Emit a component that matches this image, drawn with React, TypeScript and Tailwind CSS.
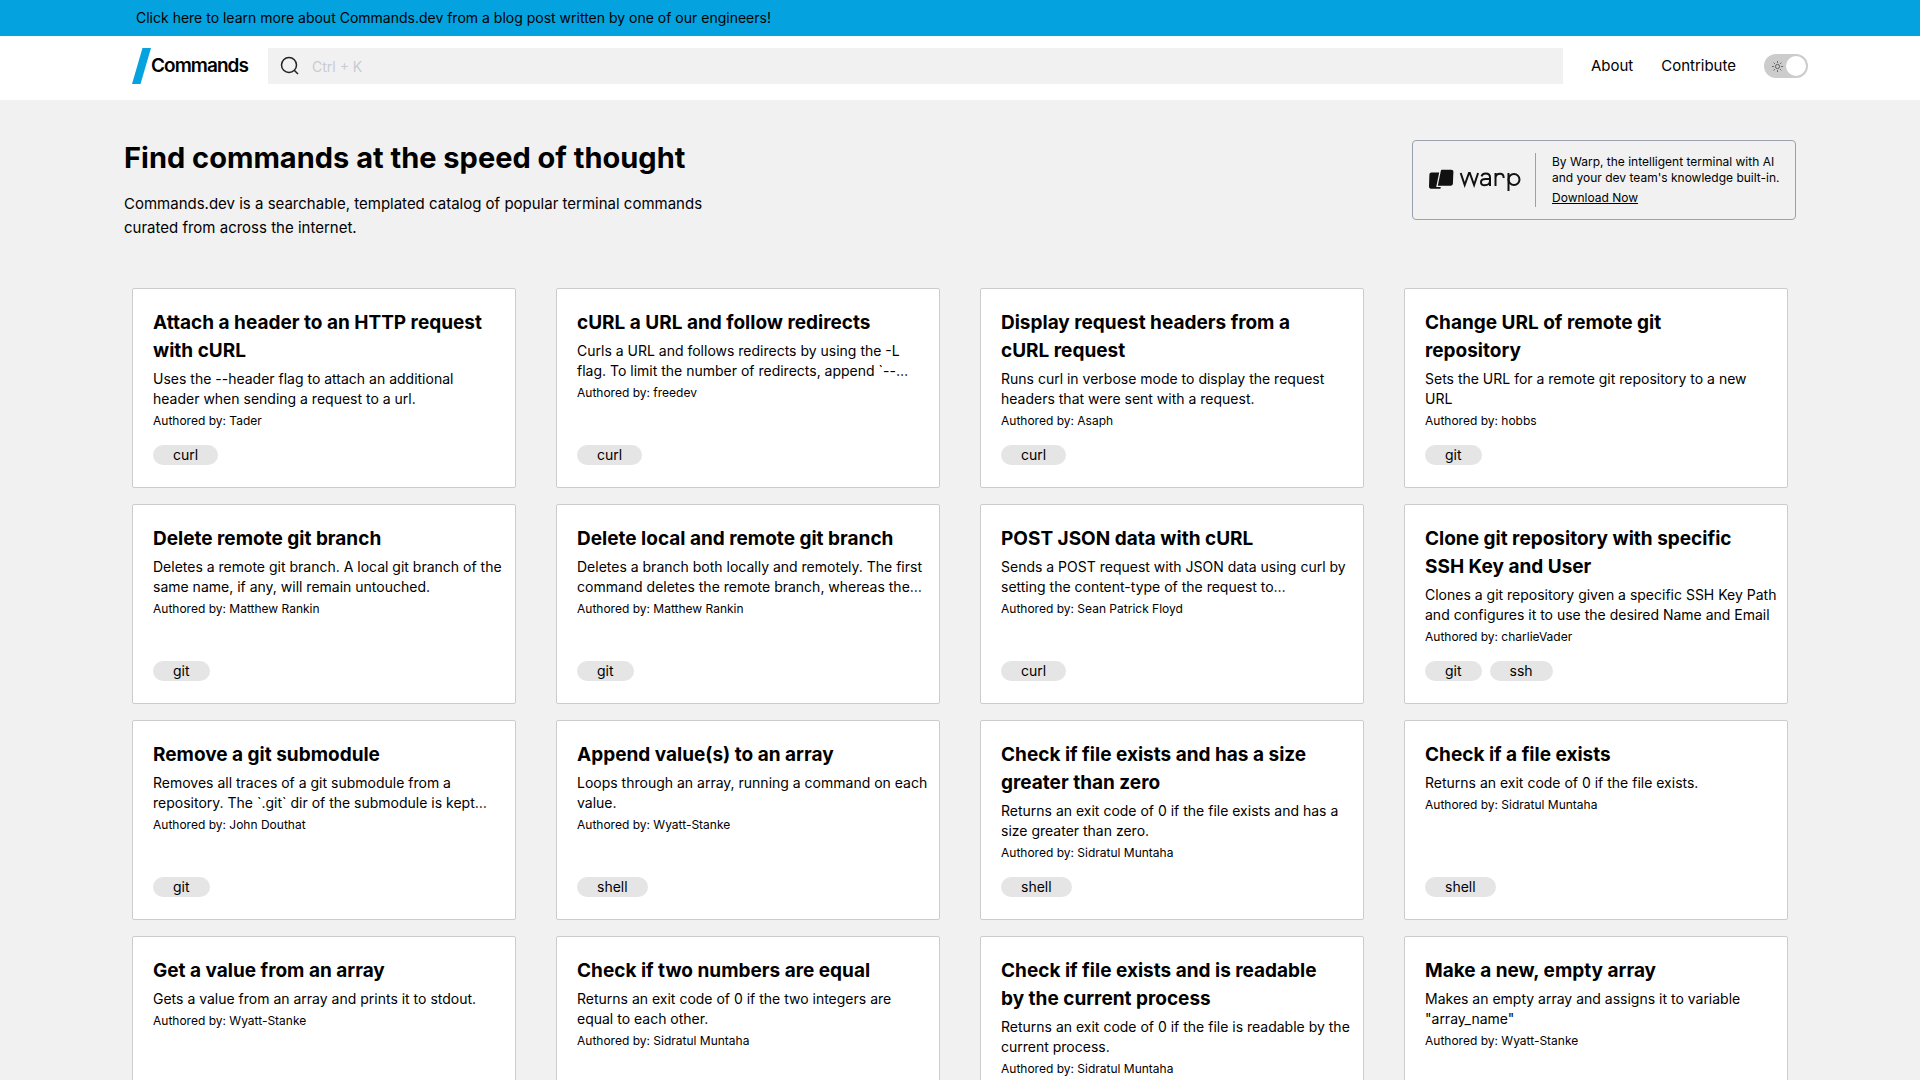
interface Command {
  title: string;
  description: string;
  author: string;
  tags: string[];
}

// line breaks inside title and description are kept by the card
const commands: Command[] = [
  {
    title: "Attach a header to an HTTP request\nwith cURL",
    description: "Uses the --header flag to attach an additional\nheader when sending a request to a url.",
    author: "Tader",
    tags: ["curl"],
  },
  {
    title: "cURL a URL and follow redirects",
    description: "Curls a URL and follows redirects by using the -L\nflag. To limit the number of redirects, append `--…",
    author: "freedev",
    tags: ["curl"],
  },
  {
    title: "Display request headers from a\ncURL request",
    description: "Runs curl in verbose mode to display the request\nheaders that were sent with a request.",
    author: "Asaph",
    tags: ["curl"],
  },
  {
    title: "Change URL of remote git\nrepository",
    description: "Sets the URL for a remote git repository to a new\nURL",
    author: "hobbs",
    tags: ["git"],
  },
  {
    title: "Delete remote git branch",
    description: "Deletes a remote git branch. A local git branch of the\nsame name, if any, will remain untouched.",
    author: "Matthew Rankin",
    tags: ["git"],
  },
  {
    title: "Delete local and remote git branch",
    description: "Deletes a branch both locally and remotely. The first\ncommand deletes the remote branch, whereas the…",
    author: "Matthew Rankin",
    tags: ["git"],
  },
  {
    title: "POST JSON data with cURL",
    description: "Sends a POST request with JSON data using curl by\nsetting the content-type of the request to…",
    author: "Sean Patrick Floyd",
    tags: ["curl"],
  },
  {
    title: "Clone git repository with specific\nSSH Key and User",
    description: "Clones a git repository given a specific SSH Key Path\nand configures it to use the desired Name and Email",
    author: "charlieVader",
    tags: ["git", "ssh"],
  },
  {
    title: "Remove a git submodule",
    description: "Removes all traces of a git submodule from a\nrepository. The `.git` dir of the submodule is kept…",
    author: "John Douthat",
    tags: ["git"],
  },
  {
    title: "Append value(s) to an array",
    description: "Loops through an array, running a command on each\nvalue.",
    author: "Wyatt-Stanke",
    tags: ["shell"],
  },
  {
    title: "Check if file exists and has a size\ngreater than zero",
    description: "Returns an exit code of 0 if the file exists and has a\nsize greater than zero.",
    author: "Sidratul Muntaha",
    tags: ["shell"],
  },
  {
    title: "Check if a file exists",
    description: "Returns an exit code of 0 if the file exists.",
    author: "Sidratul Muntaha",
    tags: ["shell"],
  },
  {
    title: "Get a value from an array",
    description: "Gets a value from an array and prints it to stdout.",
    author: "Wyatt-Stanke",
    tags: ["shell"],
  },
  {
    title: "Check if two numbers are equal",
    description: "Returns an exit code of 0 if the two integers are\nequal to each other.",
    author: "Sidratul Muntaha",
    tags: ["shell"],
  },
  {
    title: "Check if file exists and is readable\nby the current process",
    description: "Returns an exit code of 0 if the file is readable by the\ncurrent process.",
    author: "Sidratul Muntaha",
    tags: ["shell"],
  },
  {
    title: "Make a new, empty array",
    description: 'Makes an empty array and assigns it to variable\n"array_name"',
    author: "Wyatt-Stanke",
    tags: ["shell"],
  },
];

function Logo() {
  return (
    <a href="#" className="flex items-center">
      <svg width="19" height="36" viewBox="0 0 19 36" aria-hidden="true">
        <path d="M10.5 0H19L8.5 36H0z" fill="#04a3df" />
      </svg>
      <span className="text-[19px] font-semibold tracking-tighter">Commands</span>
    </a>
  );
}

function SearchBar() {
  return (
    <label className="flex h-9 flex-1 items-center bg-[#f1f1f1] pl-3">
      <svg width="20" height="20" viewBox="0 0 20 20" fill="none" stroke="#222" strokeWidth="1.5" aria-hidden="true">
        <circle cx="9" cy="9" r="7.5" />
        <path d="M14.2 14.2L18 18" />
      </svg>
      <input
        type="text"
        aria-label="Search commands"
        placeholder="Ctrl + K"
        className="ml-3 h-full min-w-0 flex-1 bg-transparent text-sm outline-none placeholder:text-[#c8ccd2]"
      />
    </label>
  );
}

function ThemeSwitch() {
  return (
    <button
      type="button"
      role="switch"
      aria-checked="false"
      aria-label="Dark mode"
      className="flex h-6 w-11 items-center justify-between rounded-full bg-[#cccccc] pr-0.5 pl-2"
    >
      <svg width="11" height="11" viewBox="0 0 11 11" fill="none" stroke="#555" strokeWidth="0.9" aria-hidden="true">
        <circle cx="5.5" cy="5.5" r="2.1" />
        <path d="M5.5 0v1.8M5.5 9.2V11M0 5.5h1.8M9.2 5.5H11M1.6 1.6l1.3 1.3M8.1 8.1l1.3 1.3M1.6 9.4l1.3-1.3M8.1 2.9l1.3-1.3" />
      </svg>
      <span className="size-5 rounded-full bg-white" />
    </button>
  );
}

function WarpLogo() {
  return (
    <svg width="92" height="22" viewBox="0 0 92 22" role="img" aria-label="warp">
      <path d="M10.2 3.6H2.6C1.2 3.6.5 4.4.4 5.7L0 17.6c0 1.4.7 2.1 2 2.1h9.4l.4-1.6H7.2z" fill="#111" />
      <path d="M13 .7h9.2c1.4 0 2.2.8 2.2 2.1l-.5 11.8c-.1 1.4-.9 2.1-2.2 2.1H8.8l3-14.7C12 1.1 12.3.7 13 .7z" fill="#111" />
      <g fill="none" stroke="#111" strokeWidth="2">
        <path d="M31.7 4l4 12 4.3-12h.8l4.3 12 4-12" />
        <path d="M52.5 7.3c.7-2 2.3-2.7 4.2-2.7 2.7 0 4.3 1.3 4.3 4V17M61 10h-4.3c-3 0-4.7 1-4.7 3.2 0 2 1.5 3.1 3.8 3.1 3 0 5.2-1.8 5.2-4.6" />
        <path d="M66.5 17V4M66.5 9c.3-2.8 2-4.2 4.5-4.2 2.6 0 3.7 1.6 3.7 4.2" />
        <path d="M79.5 22V4" />
        <circle cx="85" cy="10.5" r="5.5" />
      </g>
    </svg>
  );
}

function WarpCard() {
  return (
    <aside className="flex h-20 w-96 items-center rounded border border-gray-400 pl-4">
      <WarpLogo />
      <div className="ml-3.5 h-[54px] w-px bg-gray-400" />
      <div className="ml-4 text-xs">
        <p>
          By Warp, the intelligent terminal with AI
          <br />
          and your dev team's knowledge built-in.
        </p>
        <a href="#" className="mt-1 block underline">
          Download Now
        </a>
      </div>
    </aside>
  );
}

function CommandCard({ title, description, author, tags }: Command) {
  return (
    <article className="flex min-h-[200px] flex-col rounded-xs border border-[#cccccc] bg-white pt-5 pr-1 pb-[22px] pl-5">
      <h2 className="text-[19px] leading-7 font-bold whitespace-pre-line">{title}</h2>
      <p className="mt-1 text-sm whitespace-pre-line">{description}</p>
      <p className="mt-1 text-xs">Authored by: {author}</p>
      <div className="mt-auto flex gap-2">
        {tags.map((tag) => (
          <a key={tag} href="#" className="rounded-full bg-[#e5e5e5] px-5 text-sm">
            {tag}
          </a>
        ))}
      </div>
    </article>
  );
}

export default function App() {
  return (
    <div className="min-h-screen bg-[#f1f1f1] font-['Inter',sans-serif] text-black">
      <div className="h-9 bg-[#04a3df] px-[136px]">
        <a href="#" className="block text-sm leading-9">
          Click here to learn more about Commands.dev from a blog post written by one of our engineers!
        </a>
      </div>

      <header className="flex h-16 items-center bg-white pr-28 pb-1 pl-[132px]">
        <Logo />
        <div className="ml-5 flex flex-1">
          <SearchBar />
        </div>
        <nav className="ml-7 flex items-center gap-7 text-[15px]">
          <a href="#">About</a>
          <a href="#">Contribute</a>
          <ThemeSwitch />
        </nav>
      </header>

      <main className="px-[124px] pt-10 pb-10">
        <section className="flex items-start justify-between">
          <div>
            <h1 className="text-[29px] leading-9 font-bold">Find commands at the speed of thought</h1>
            <p className="mt-4 max-w-[600px] text-[15px] leading-6">
              Commands.dev is a searchable, templated catalog of popular terminal commands curated from across the
              internet.
            </p>
          </div>
          <WarpCard />
        </section>

        <section className="mt-12 grid grid-cols-4 gap-x-10 gap-y-4 px-2">
          {commands.map((command) => (
            <CommandCard key={command.title} {...command} />
          ))}
        </section>
      </main>
    </div>
  );
}
